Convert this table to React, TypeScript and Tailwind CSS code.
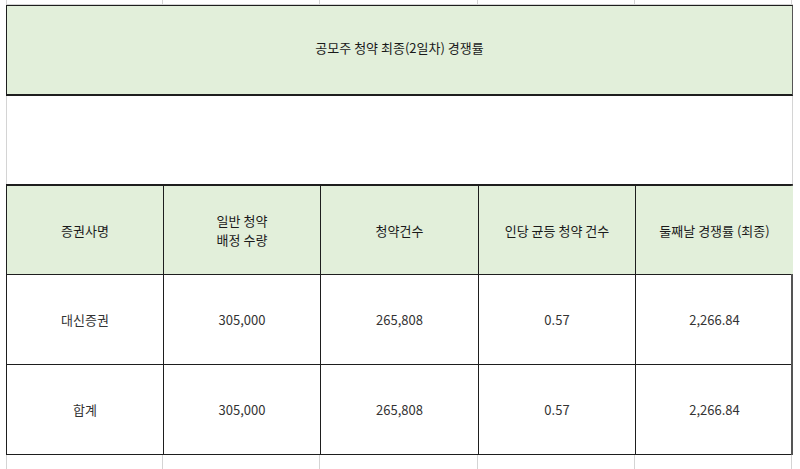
import React from "react";

const cols = "grid grid-cols-[157px_157px_158px_157px_157px]";

function GridStrip({ h }: { h: string }) {
  return (
    <div className={`${cols} ${h}`}>
      {[0, 1, 2, 3, 4].map((i) => (
        <div key={i} className={`border-r border-[#d4d4d4] ${i === 0 ? "border-l" : ""}`} />
      ))}
    </div>
  );
}

function Cell({ children, green, last }: { children: React.ReactNode; green?: boolean; last?: boolean }) {
  return (
    <div
      className={`flex items-center justify-center text-center leading-[19px] ${
        last ? "" : "border-r border-[#1e1e1e]"
      } ${green ? "bg-[#e2efda] text-[#1a1a1a]" : "text-[#333]"}`}
    >
      {children}
    </div>
  );
}

export default function App() {
  const rows = [
    ["대신증권", "305,000", "265,808", "0.57", "2,266.84"],
    ["합계", "305,000", "265,808", "0.57", "2,266.84"],
  ];
  return (
    <div
      className="w-[800px] h-[469px] bg-white overflow-hidden text-[13px]"
      style={{ fontFamily: '"Noto Sans CJK KR", "Noto Sans", sans-serif' }}
    >
      <div className="ml-[6px] w-[787px]">
        <div className="border-b border-[#d4d4d4]">
          <GridStrip h="h-[4px]" />
        </div>
        <div className="h-[91px] pb-[4px] bg-[#e2efda] border border-b-2 border-[#1e1e1e] border-r-[#555] flex items-center justify-center text-[#1a1a1a]">
          공모주 청약 최종(2일차) 경쟁률
        </div>
        <div className="h-[88px] border-x border-[#d4d4d4]" />
        <div className="border-t-2 border-l border-r-2 border-[#1e1e1e] border-r-[#555]">
          <div className={`${cols} h-[89px] border-b border-[#1e1e1e]`}>
            <Cell green>증권사명</Cell>
            <Cell green>
              일반 청약
              <br />
              배정 수량
            </Cell>
            <Cell green>청약건수</Cell>
            <Cell green>인당 균등 청약 건수</Cell>
            <Cell green last>
              둘째날 경쟁률 (최종)
            </Cell>
          </div>
          {rows.map((r, i) => (
            <div key={i} className={`${cols} h-[90px] border-b border-[#1e1e1e]`}>
              {r.map((t, j) => (
                <Cell key={j} last={j === 4}>
                  {t}
                </Cell>
              ))}
            </div>
          ))}
        </div>
        <GridStrip h="h-[20px]" />
      </div>
    </div>
  );
}
